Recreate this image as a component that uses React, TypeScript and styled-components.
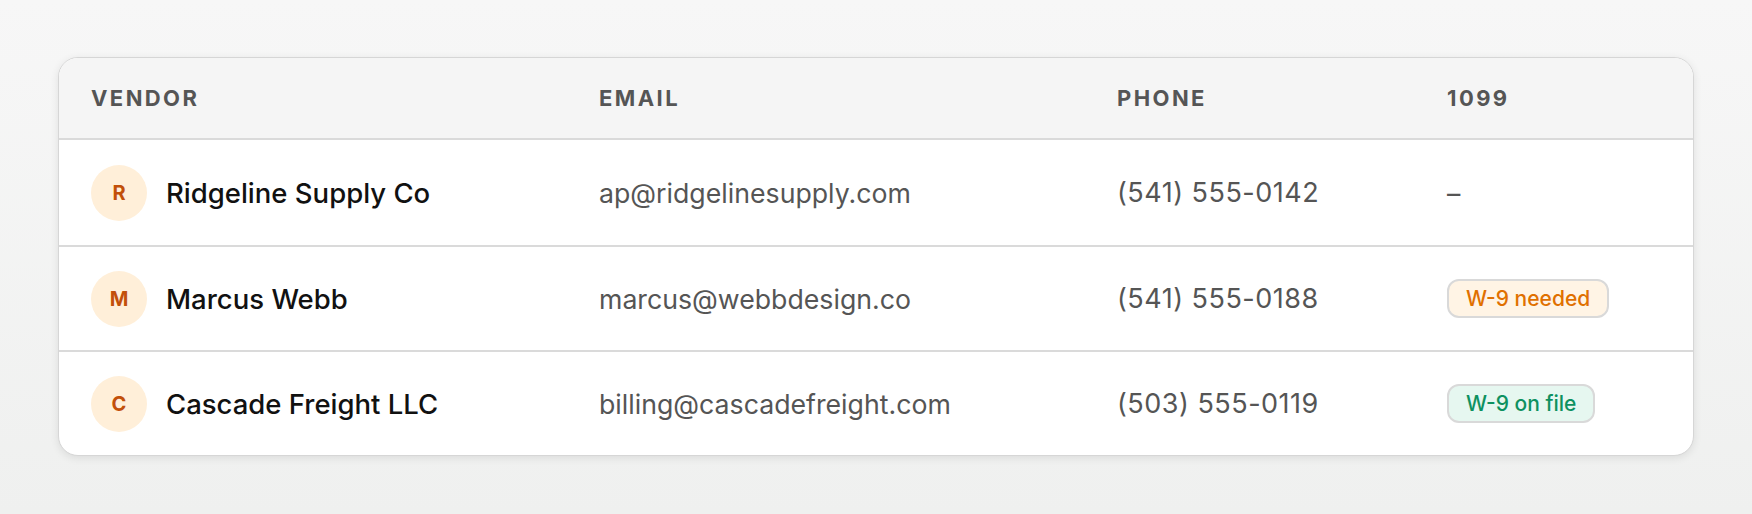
import styled, { createGlobalStyle } from 'styled-components';

const GlobalStyle = createGlobalStyle`
  * {
    box-sizing: border-box;
  }
  body {
    margin: 0;
    background: linear-gradient(180deg, #f7f7f7 0%, #eff0ef 100%);
    font-family: 'Inter', 'Liberation Sans', sans-serif;
    -webkit-font-smoothing: antialiased;
  }
`;

const Page = styled.div`
  min-height: 514px;
  padding: 57px 58px;
`;

const Card = styled.div`
  background: #fff;
  border: 1px solid #d6d6d6;
  border-radius: 20px;
  overflow: hidden;
  box-shadow: 0 2px 8px rgba(0, 0, 0, 0.09);
`;

const columns = '508px 518px 330px 1fr';

const HeaderRow = styled.div`
  display: grid;
  grid-template-columns: ${columns};
  height: 82px;
  align-items: center;
  background: #f5f5f5;
  border-bottom: 2px solid #dadada;
`;

const HeadCell = styled.div`
  padding: 0 32px;
  font-size: 22px;
  font-weight: 700;
  letter-spacing: 0.11em;
  color: #555;
  text-transform: uppercase;
`;

const Row = styled.div`
  display: grid;
  grid-template-columns: ${columns};
  height: 105px;
  align-items: center;
  & + & {
    border-top: 2px solid #dadada;
  }
`;

const Cell = styled.div`
  padding: 0 32px;
  font-size: 26.7px;
  color: #555;
  white-space: nowrap;
`;

const PhoneCell = styled(Cell)`
  font-size: 27px;
  letter-spacing: 0.5px;
`;

const VendorCell = styled(Cell)`
  display: flex;
  align-items: center;
  gap: 19px;
`;

const Avatar = styled.div`
  width: 56px;
  height: 56px;
  border-radius: 50%;
  background: #ffefd9;
  color: #c2500a;
  font-size: 20px;
  font-weight: 700;
  display: flex;
  align-items: center;
  justify-content: center;
  flex-shrink: 0;
`;

const Name = styled.span`
  color: #111;
  font-size: 27.5px;
  font-weight: 500;
`;

type Tone = 'warn' | 'ok';

const Badge = styled.span<{ $tone: Tone }>`
  display: inline-flex;
  align-items: center;
  height: 39px;
  padding: 0 17px;
  border: 2px solid #d9d9d9;
  border-radius: 12px;
  font-size: 21px;
  font-weight: 500;
  letter-spacing: 0;
  background: ${(p) => (p.$tone === 'warn' ? '#fff4e5' : '#e6f7f0')};
  color: ${(p) => (p.$tone === 'warn' ? '#e07000' : '#0e9160')};
`;

const vendors: {
  name: string;
  email: string;
  phone: string;
  w9?: { label: string; tone: Tone };
}[] = [
  { name: 'Ridgeline Supply Co', email: 'ap@ridgelinesupply.com', phone: '(541) 555-0142' },
  {
    name: 'Marcus Webb',
    email: 'marcus@webbdesign.co',
    phone: '(541) 555-0188',
    w9: { label: 'W-9 needed', tone: 'warn' },
  },
  {
    name: 'Cascade Freight LLC',
    email: 'billing@cascadefreight.com',
    phone: '(503) 555-0119',
    w9: { label: 'W-9 on file', tone: 'ok' },
  },
];

const App = () => {
  return (
    <Page>
      <GlobalStyle />
      <Card>
        <HeaderRow>
          <HeadCell>Vendor</HeadCell>
          <HeadCell>Email</HeadCell>
          <HeadCell>Phone</HeadCell>
          <HeadCell>1099</HeadCell>
        </HeaderRow>
        {vendors.map((v) => (
          <Row key={v.name}>
            <VendorCell>
              <Avatar>{v.name[0]}</Avatar>
              <Name>{v.name}</Name>
            </VendorCell>
            <Cell>{v.email}</Cell>
            <PhoneCell>{v.phone}</PhoneCell>
            <Cell>{v.w9 ? <Badge $tone={v.w9.tone}>{v.w9.label}</Badge> : '–'}</Cell>
          </Row>
        ))}
      </Card>
    </Page>
  );
};

export default App;
